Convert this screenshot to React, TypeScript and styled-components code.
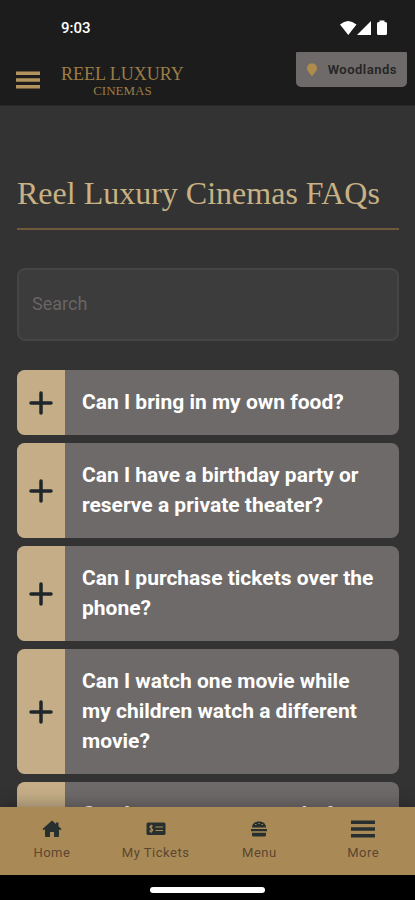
import React from "react";
import styled, { createGlobalStyle } from "styled-components";

const GlobalStyle = createGlobalStyle`
  *, *::before, *::after { box-sizing: border-box; }
  body { margin: 0; background: #333333; font-family: Roboto, "Open Sans", sans-serif; }
  button { font: inherit; border: 0; padding: 0; background: none; cursor: pointer; }
  a { text-decoration: none; color: inherit; }
  svg { display: block; }
`;

const Screen = styled.div`
  display: flex;
  flex-direction: column;
  height: 100vh;
  overflow: hidden;
  background: #333333;
`;

const Header = styled.header`
  flex: none;
  background: #1c1c1c;
  border-bottom: 1px solid #292929;
`;

const StatusBar = styled.div`
  display: flex;
  align-items: center;
  justify-content: space-between;
  height: 52px;
  padding: 4px 27px 0 61px;
  color: #ffffff;
  font-size: 15px;
  font-weight: 500;
`;

const Toolbar = styled.div`
  display: flex;
  align-items: flex-start;
  height: 53px;
  padding: 0 8px 0 16px;
`;

const MenuButton = styled.button`
  margin-top: 19px;
  color: #b3935c;
`;

const Logo = styled.a`
  display: flex;
  flex-direction: column;
  align-items: center;
  margin: 12px 0 0 21px;
  color: #9b7d45;
  font-family: "Liberation Serif", serif;
  white-space: nowrap;
`;

const LogoName = styled.span`
  font-size: 18px;
  line-height: 20px;
`;

const LogoSub = styled.span`
  font-size: 13px;
  line-height: 13px;
`;

const Location = styled.button`
  display: flex;
  align-items: center;
  gap: 10px;
  height: 35px;
  margin-left: auto;
  padding: 0 10px;
  border-radius: 1px 1px 5px 5px;
  background: #6e6a69;
  color: #252525;
  font-size: 13px;
  font-weight: 600;
  letter-spacing: 0.5px;
`;

const Content = styled.main`
  flex: 1;
  min-height: 0;
  overflow: hidden;
  padding: 64px 16px 0 17px;
`;

const Title = styled.h1`
  margin: 0 0 38px;
  padding-bottom: 12px;
  border-bottom: 2px solid #70593b;
  color: #c8b184;
  font-family: "Liberation Serif", serif;
  font-size: 32px;
  font-weight: 400;
  line-height: 46px;
  white-space: nowrap;
`;

const SearchBox = styled.input`
  display: block;
  width: 100%;
  height: 73px;
  margin-bottom: 29px;
  padding: 0 13px 2px;
  border: 2px solid #454545;
  border-radius: 8px;
  background: #3c3c3c;
  color: #ffffff;
  font-family: inherit;
  font-size: 18px;
  &::placeholder { color: #696464; opacity: 1; }
`;

const FaqList = styled.div`
  display: grid;
  gap: 8px;
`;

const FaqItem = styled.button`
  display: flex;
  width: 100%;
  overflow: hidden;
  border-radius: 8px;
  background: #6e6a69;
  text-align: left;
`;

const Expand = styled.span`
  display: flex;
  flex: none;
  align-items: center;
  justify-content: center;
  align-self: stretch;
  width: 48px;
  background: #c5ae87;
`;

const Question = styled.span`
  padding: 17px 17px 18px;
  color: #ffffff;
  font-size: 21px;
  font-weight: 700;
  line-height: 30px;
`;

const TabBar = styled.nav`
  position: relative;
  display: grid;
  grid-template-columns: repeat(4, 1fr);
  flex: none;
  height: 68px;
  background: #a98a56;
  box-shadow: 0 -2px 16px rgba(0, 0, 0, 0.3);
`;

const Tab = styled.a`
  display: flex;
  flex-direction: column;
  align-items: center;
  gap: 6px;
  padding-top: 12px;
  color: #5b4632;
  font-size: 13px;
  line-height: 16px;
  letter-spacing: 0.5px;
`;

const TabIcon = styled.span`
  display: flex;
  align-items: center;
  height: 20px;
  color: #28302f;
`;

const SystemBar = styled.div`
  display: flex;
  flex: none;
  justify-content: center;
  height: 25px;
  padding-top: 12px;
  background: #000000;
`;

const HomeIndicator = styled.div`
  width: 115px;
  height: 6px;
  border-radius: 3px;
  background: #ffffff;
`;

const questions = [
  "Can I bring in my own food?",
  "Can I have a birthday party or reserve a private theater?",
  "Can I purchase tickets over the phone?",
  "Can I watch one movie while my children watch a different movie?",
  "Can I reserve my seats before arriving?",
];

const StatusIcons = () => (
  <svg width="48" height="18" viewBox="0 0 48 18" fill="#fff" aria-hidden="true">
    <path d="M0 5.5Q8 -1.5 16.500 5.500L8.250 16Z" />
    <path d="M31 2V16H17Z" />
    <path d="M39.500 3V1.500H44.500V3H45.500Q47 3 47 4.500V14.500Q47 16 45.500 16H38.500Q37 16 37 14.500V4.500Q37 3 38.500 3Z" />
  </svg>
);

const Bars = () => (
  <svg width="24" height="18" viewBox="0 0 24 18" fill="currentColor" aria-hidden="true">
    <path d="M0 0.500h24v3.500H0zM0 7.200h24v3.500H0zM0 14h24v3.500H0z" />
  </svg>
);

const Pin = () => (
  <svg width="12" height="14" viewBox="0 0 12 14" aria-hidden="true">
    <path d="M6 0.500C3 0.500 1 2.500 1 5.200C1 8 4 10 6 13.500C8 10 11 8 11 5.200C11 2.500 9 0.500 6 0.500Z" fill="#b08c4c" />
  </svg>
);

const Plus = () => (
  <svg width="24" height="24" viewBox="0 0 24 24" stroke="#1e252b" strokeWidth="3.500" strokeLinecap="round" aria-hidden="true">
    <path d="M2 12H22M12 2V22" />
  </svg>
);

const HomeIcon = () => (
  <svg width="20" height="18" viewBox="0 0 20 18" fill="#28302f" aria-hidden="true">
    <path d="M10 0.500L0.500 9L1.500 10.200L3 9.200V16.200Q3 17 3.800 17H8V12H12V17H16.200Q17 17 17 16.200V9.200L18.500 10.200L19.500 9L16.500 6.300V2.500H14V4Z" />
  </svg>
);

const TicketIcon = () => (
  <svg width="20" height="14" viewBox="0 0 20 14" aria-hidden="true">
    <rect x="0.500" y="0.500" width="19" height="12.500" rx="1.500" fill="#28302f" />
    <path d="M9.500 5H17M9.500 8.500H17M6.800 4.200C5.500 3.400 3.600 4 4 5.300C4.400 6.700 6.700 6.400 6.700 8C6.700 9.500 4.600 9.600 3.400 8.800M5.200 2.700V10.800" fill="none" stroke="#a98a56" strokeWidth="1.200" />
  </svg>
);

const BurgerIcon = () => (
  <svg width="16" height="18" viewBox="0 0 16 18" aria-hidden="true">
    <path d="M1 7.500C1 3.500 4 1.500 8 1.500C12 1.500 15 3.500 15 7.500ZM0 9H16V11.200H0ZM1 12.700H15V15Q15 16.500 13.500 16.500H2.500Q1 16.500 1 15Z" fill="#28302f" />
    <path d="M4 4.500H5.500M7.300 3.500H8.800M10.500 4.500H12" stroke="#a98a56" strokeWidth="0.900" />
  </svg>
);

const tabs = [
  { label: "Home", icon: <HomeIcon /> },
  { label: "My Tickets", icon: <TicketIcon /> },
  { label: "Menu", icon: <BurgerIcon /> },
  { label: "More", icon: <Bars /> },
];

export default function App() {
  return (
    <Screen>
      <GlobalStyle />
      <Header>
        <StatusBar>
          <span>9:03</span>
          <StatusIcons />
        </StatusBar>
        <Toolbar>
          <MenuButton aria-label="Open menu"><Bars /></MenuButton>
          <Logo href="#">
            <LogoName>REEL LUXURY</LogoName>
            <LogoSub>CINEMAS</LogoSub>
          </Logo>
          <Location><Pin />Woodlands</Location>
        </Toolbar>
      </Header>
      <Content>
        <Title>Reel Luxury Cinemas FAQs</Title>
        <SearchBox type="search" placeholder="Search" aria-label="Search" />
        <FaqList>
          {questions.map((question) => (
            <FaqItem key={question} aria-expanded={false}>
              <Expand><Plus /></Expand>
              <Question>{question}</Question>
            </FaqItem>
          ))}
        </FaqList>
      </Content>
      <TabBar>
        {tabs.map(({ label, icon }) => (
          <Tab key={label} href="#">
            <TabIcon>{icon}</TabIcon>
            {label}
          </Tab>
        ))}
      </TabBar>
      <SystemBar><HomeIndicator /></SystemBar>
    </Screen>
  );
}
